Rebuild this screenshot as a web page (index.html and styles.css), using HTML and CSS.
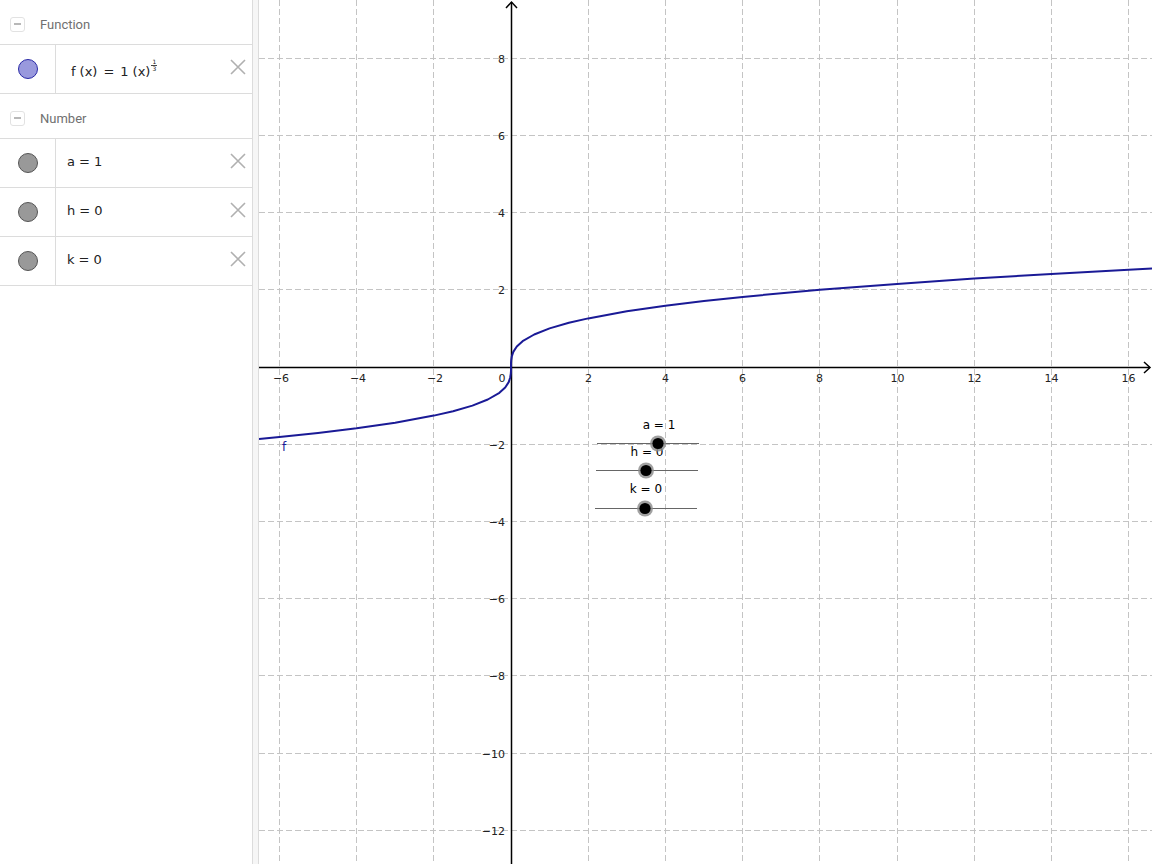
FILE: index.html
```html
<!DOCTYPE html>
<html>
<head>
<meta charset="utf-8">
<title>Graph</title>
<link rel="stylesheet" href="styles.css">
</head>
<body>
<div class="app">
  <aside class="algebra">
    <div class="group-header"><span class="collapse"><span class="dash"></span></span><span class="group-title">Function</span></div>
    <div class="item">
      <div class="marble-cell"><span class="marble blue"></span></div>
      <div class="formula func">f<span class="sp1"></span>(x) <span class="eq">=</span> 1 <span class="sp1"></span>(x)<span class="frac"><span class="num">1</span><span class="den">3</span></span></div>
      <svg class="close" width="16" height="16" viewBox="0 0 16 16"><path d="M1 1 L15 15 M15 1 L1 15" stroke="#b0b0b0" stroke-width="1.6" fill="none"/></svg>
    </div>
    <div class="group-header"><span class="collapse"><span class="dash"></span></span><span class="group-title">Number</span></div>
    <div class="item">
      <div class="marble-cell"><span class="marble gray"></span></div>
      <div class="formula num-val">a <span class="eq">=</span> 1</div>
      <svg class="close" width="16" height="16" viewBox="0 0 16 16"><path d="M1 1 L15 15 M15 1 L1 15" stroke="#b0b0b0" stroke-width="1.6" fill="none"/></svg>
    </div>
    <div class="item">
      <div class="marble-cell"><span class="marble gray"></span></div>
      <div class="formula num-val">h <span class="eq">=</span> 0</div>
      <svg class="close" width="16" height="16" viewBox="0 0 16 16"><path d="M1 1 L15 15 M15 1 L1 15" stroke="#b0b0b0" stroke-width="1.6" fill="none"/></svg>
    </div>
    <div class="item">
      <div class="marble-cell"><span class="marble gray"></span></div>
      <div class="formula num-val">k <span class="eq">=</span> 0</div>
      <svg class="close" width="16" height="16" viewBox="0 0 16 16"><path d="M1 1 L15 15 M15 1 L1 15" stroke="#b0b0b0" stroke-width="1.6" fill="none"/></svg>
    </div>
  </aside>
  <div class="divider"></div>
  <main class="graph">
    <svg class="canvas" width="893" height="864" viewBox="0 0 893 864">
      <g class="grid" stroke="#c4c4c4" stroke-width="1" stroke-dasharray="6 3" shape-rendering="crispEdges">
        <line x1="20.5" y1="0" x2="20.5" y2="864"/>
        <line x1="97.5" y1="0" x2="97.5" y2="864"/>
        <line x1="174.5" y1="0" x2="174.5" y2="864"/>
        <line x1="329.5" y1="0" x2="329.5" y2="864"/>
        <line x1="406.5" y1="0" x2="406.5" y2="864"/>
        <line x1="483.5" y1="0" x2="483.5" y2="864"/>
        <line x1="560.5" y1="0" x2="560.5" y2="864"/>
        <line x1="638.5" y1="0" x2="638.5" y2="864"/>
        <line x1="715.5" y1="0" x2="715.5" y2="864"/>
        <line x1="792.5" y1="0" x2="792.5" y2="864"/>
        <line x1="869.5" y1="0" x2="869.5" y2="864"/>
        <line x1="0" y1="58.5" x2="893" y2="58.5"/>
        <line x1="0" y1="135.5" x2="893" y2="135.5"/>
        <line x1="0" y1="212.5" x2="893" y2="212.5"/>
        <line x1="0" y1="289.5" x2="893" y2="289.5"/>
        <line x1="0" y1="444.5" x2="893" y2="444.5"/>
        <line x1="0" y1="521.5" x2="893" y2="521.5"/>
        <line x1="0" y1="598.5" x2="893" y2="598.5"/>
        <line x1="0" y1="675.5" x2="893" y2="675.5"/>
        <line x1="0" y1="753.5" x2="893" y2="753.5"/>
        <line x1="0" y1="830.5" x2="893" y2="830.5"/>
      </g>
      <g class="axes" stroke="#000" stroke-width="1.5" fill="none">
        <line x1="0" y1="367.5" x2="891" y2="367.5"/>
        <line x1="252.5" y1="864" x2="252.5" y2="2"/>
        <path d="M885 362 L891 367.5 L885 373"/>
        <path d="M247 8 L252.5 2 L258 8"/>
      </g>
      <g class="labels" font-family="'DejaVu Sans', sans-serif" font-size="11" fill="#222">
        <g text-anchor="middle">
          <text x="22" y="382">−6</text>
          <text x="99" y="382">−4</text>
          <text x="176" y="382">−2</text>
          <text x="329.5" y="382">2</text>
          <text x="406.5" y="382">4</text>
          <text x="483.5" y="382">6</text>
          <text x="560.5" y="382">8</text>
          <text x="638.5" y="382">10</text>
          <text x="715.5" y="382">12</text>
          <text x="792.5" y="382">14</text>
          <text x="869.5" y="382">16</text>
        </g>
        <text x="243" y="382" text-anchor="middle">0</text>
        <g text-anchor="end">
          <text x="246" y="62.5">8</text>
          <text x="246" y="139.5">6</text>
          <text x="246" y="216.5">4</text>
          <text x="246" y="293.5">2</text>
          <text x="246" y="448.5">−2</text>
          <text x="246" y="525.5">−4</text>
          <text x="246" y="602.5">−6</text>
          <text x="246" y="679.5">−8</text>
          <text x="246" y="757.5">−10</text>
          <text x="246" y="834.5">−12</text>
        </g>
      </g>
      <path class="curve" fill="none" stroke="#1a1a96" stroke-width="2" stroke-linejoin="round" d="M0 439.1 L20.4 437.1 L59 433 L97.6 428.3 L136.2 422.7 L174.8 415.6 L194.1 411.2 L213.4 405.6 L228.8 399.5 L240.4 392.8 L246.2 387.5 L249.7 382.1 L251.2 377.5 L251.8 373.6 L252 370.9 L252 367 L252 363.1 L252.2 360.4 L252.8 356.5 L254.3 351.9 L257.8 346.5 L263.6 341.2 L275.2 334.5 L290.6 328.4 L309.9 322.8 L329.2 318.4 L367.8 311.3 L406.4 305.7 L445 301 L483.6 296.9 L560.8 289.8 L638 283.9 L715.2 278.6 L792.4 274 L869.6 269.7 L893 268.6"/>
      <text x="23" y="451" font-family="'DejaVu Sans', sans-serif" font-size="12" fill="#1a1a96">f</text>
      <g class="sliders" font-family="'DejaVu Sans', sans-serif" font-size="12" fill="#000">
        <line x1="338" y1="443.5" x2="440" y2="443.5" stroke="#666" stroke-width="1"/>
        <line x1="337" y1="470.5" x2="439" y2="470.5" stroke="#666" stroke-width="1"/>
        <line x1="336" y1="508.5" x2="438" y2="508.5" stroke="#666" stroke-width="1"/>
        <text x="400" y="429" text-anchor="middle">a = 1</text>
        <text x="388" y="456" text-anchor="middle">h = 0</text>
        <text x="387" y="493" text-anchor="middle">k = 0</text>
        <circle cx="399" cy="443.5" r="8" fill="#8a8a8a" opacity="0.8"/>
        <circle cx="399" cy="443.5" r="5.6" fill="#000"/>
        <circle cx="387" cy="470.5" r="8" fill="#8a8a8a" opacity="0.8"/>
        <circle cx="387" cy="470.5" r="5.6" fill="#000"/>
        <circle cx="386" cy="508.5" r="8" fill="#8a8a8a" opacity="0.8"/>
        <circle cx="386" cy="508.5" r="5.6" fill="#000"/>
      </g>
    </svg>
  </main>
</div>
</body>
</html>
```
FILE: styles.css
```css
html, body {
  margin: 0;
  padding: 0;
  background: #fff;
}
.app {
  display: flex;
  width: 1152px;
  height: 864px;
  overflow: hidden;
}
.algebra {
  width: 252px;
  flex: none;
  border-right: 1px solid #dcdcdc;
  font-family: Roboto, "Liberation Sans", sans-serif;
}
.divider {
  width: 5px;
  flex: none;
  background: #f6f6f6;
  border-right: 1px solid #dcdcdc;
}
.graph {
  flex: 1;
  position: relative;
  background: #fff;
}
.canvas {
  display: block;
}
.group-header {
  border-bottom: 1px solid #dcdcdc;
  display: flex;
  align-items: center;
  padding-top: 4px;
  box-sizing: border-box;
  height: 45px;
}
.collapse {
  width: 13px;
  height: 13px;
  border: 1px solid #e2e2e2;
  border-radius: 3px;
  margin-left: 10px;
  display: flex;
  align-items: center;
  justify-content: center;
}
.collapse .dash {
  width: 7px;
  height: 1.5px;
  background: #b8b8b8;
}
.group-title {
  margin-left: 15px;
  font-size: 13px;
  color: #707070;
}
.item {
  height: 49px;
  box-sizing: border-box;
  border-bottom: 1px solid #dcdcdc;
  display: flex;
  align-items: center;
}
.marble-cell {
  width: 56px;
  height: 100%;
  flex: none;
  border-right: 1px solid #dcdcdc;
  display: flex;
  align-items: center;
  justify-content: center;
  box-sizing: border-box;
}
.marble {
  width: 18px;
  height: 18px;
  border-radius: 50%;
  margin-right: -1px;
}
.marble.blue {
  background: #9999dd;
  border: 1px solid #2a2aa6;
}
.marble.gray {
  background: #999;
  border: 1px solid #555;
}
.formula {
  flex: 1;
  padding-left: 11px;
  font-family: "DejaVu Sans", sans-serif;
  font-size: 13px;
  color: #222;
  white-space: nowrap;
  display: flex;
  align-items: center;
}
.formula.num-val {
  margin-top: -4px;
}
.formula.func {
  padding-left: 15px;
  margin-top: 4px;
}
.formula .eq {
  margin: 0 4px;
}
.formula.func .eq {
  margin: 0 6px;
}
.formula .sp1 {
  display: inline-block;
  width: 4px;
}
.frac {
  display: inline-flex;
  flex-direction: column;
  align-items: center;
  font-size: 6px;
  line-height: 6px;
  margin-left: 1px;
  position: relative;
  top: -6px;
}
.frac .num {
  border-bottom: 0.5px solid #444;
  padding: 0 1px;
}
.close {
  flex: none;
  margin-right: 6px;
  margin-top: -4px;
}
```
